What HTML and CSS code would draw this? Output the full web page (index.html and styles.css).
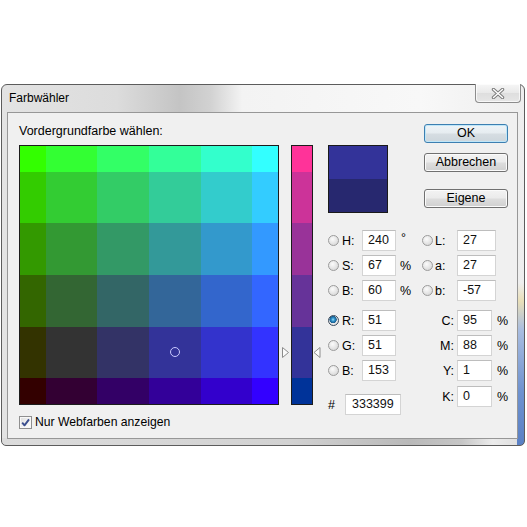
FILE: index.html
```html
<!DOCTYPE html>
<html lang="de">
<head>
<meta charset="utf-8">
<title>Farbwähler</title>
<link rel="stylesheet" href="styles.css">
</head>
<body>
<div class="window">
  <div class="titlebar">
    <span class="title">Farbwähler</span>
    <div class="close">
      <svg width="14" height="11" viewBox="0 0 14 11">
        <path d="M2.5 1.5 L11.5 9.5 M11.5 1.5 L2.5 9.5" stroke="#7c7c7c" stroke-width="3.4" stroke-linecap="round" fill="none"/>
        <path d="M2.5 1.5 L11.5 9.5 M11.5 1.5 L2.5 9.5" stroke="#ffffff" stroke-width="1.4" stroke-linecap="round" fill="none"/>
      </svg>
    </div>
  </div>
  <div class="panel">
    <div class="left">
      <div class="caption">Vordergrundfarbe wählen:</div>
      <div class="pickrow">
        <div class="field">
          <div style="background:#33ff00"></div><div style="background:#33ff33"></div><div style="background:#33ff66"></div><div style="background:#33ff99"></div><div style="background:#33ffcc"></div><div style="background:#33ffff"></div>
          <div style="background:#33cc00"></div><div style="background:#33cc33"></div><div style="background:#33cc66"></div><div style="background:#33cc99"></div><div style="background:#33cccc"></div><div style="background:#33ccff"></div>
          <div style="background:#339900"></div><div style="background:#339933"></div><div style="background:#339966"></div><div style="background:#339999"></div><div style="background:#3399cc"></div><div style="background:#3399ff"></div>
          <div style="background:#336600"></div><div style="background:#336633"></div><div style="background:#336666"></div><div style="background:#336699"></div><div style="background:#3366cc"></div><div style="background:#3366ff"></div>
          <div style="background:#333300"></div><div style="background:#333333"></div><div style="background:#333366"></div><div style="background:#333399"></div><div style="background:#3333cc"></div><div style="background:#3333ff"></div>
          <div style="background:#330000"></div><div style="background:#330033"></div><div style="background:#330066"></div><div style="background:#330099"></div><div style="background:#3300cc"></div><div style="background:#3300ff"></div>
          <span class="marker"></span>
        </div>
        <div class="slider">
          <div class="arrowcol">
            <svg class="arrow arrow-l" width="8" height="11" viewBox="0 0 8 11"><polygon points="0.5,0.5 6.5,5.5 0.5,10.5" fill="#fbfbfb" stroke="#8c8c8c" stroke-width="1"/></svg>
          </div>
          <div class="strip">
            <div style="background:#ff3399"></div>
            <div style="background:#cc3399"></div>
            <div style="background:#993399"></div>
            <div style="background:#663399"></div>
            <div style="background:#333399"></div>
            <div style="background:#003399"></div>
          </div>
          <div class="arrowcol">
            <svg class="arrow arrow-r" width="8" height="11" viewBox="0 0 8 11"><polygon points="7,0.5 1,5.5 7,10.5" fill="#fbfbfb" stroke="#8c8c8c" stroke-width="1"/></svg>
          </div>
        </div>
      </div>
      <div class="webonly">
        <span class="checkbox">
          <svg width="11" height="11" viewBox="0 0 11 11"><path d="M2.2 5.6 L4.5 8.3 L9 2.4" stroke="#3b4f8f" stroke-width="1.9" fill="none" stroke-linejoin="round"/></svg>
        </span>
        <span class="cblabel">Nur Webfarben anzeigen</span>
      </div>
    </div>

    <div class="right">
      <div class="top">
        <div class="preview">
          <div class="newc"></div>
          <div class="oldc"></div>
        </div>
        <div class="buttons">
          <div class="btn default">OK</div>
          <div class="btn">Abbrechen</div>
          <div class="btn eigene">Eigene</div>
        </div>
      </div>

      <div class="values">
        <div class="vcol vleft">
          <div class="vrow"><span class="radio"></span><span class="lbl">H:</span><span class="box">240</span><span class="unit deg">°</span></div>
          <div class="vrow"><span class="radio"></span><span class="lbl">S:</span><span class="box">67</span><span class="unit">%</span></div>
          <div class="vrow"><span class="radio"></span><span class="lbl">B:</span><span class="box">60</span><span class="unit">%</span></div>
          <div class="vrow sep"><span class="radio on"></span><span class="lbl">R:</span><span class="box">51</span></div>
          <div class="vrow"><span class="radio"></span><span class="lbl">G:</span><span class="box">51</span></div>
          <div class="vrow"><span class="radio"></span><span class="lbl">B:</span><span class="box">153</span></div>
          <div class="vrow hex"><span class="hash">#</span><span class="box hexbox">333399</span></div>
        </div>
        <div class="vcol vright">
          <div class="vrow"><span class="radio"></span><span class="lbl2">L:</span><span class="box box2">27</span></div>
          <div class="vrow"><span class="radio"></span><span class="lbl2">a:</span><span class="box box2">27</span></div>
          <div class="vrow"><span class="radio"></span><span class="lbl2">b:</span><span class="box box2">-57</span></div>
          <div class="vrow sep"><span class="clbl">C:</span><span class="box box3">95</span><span class="unit2">%</span></div>
          <div class="vrow"><span class="clbl">M:</span><span class="box box3">88</span><span class="unit2">%</span></div>
          <div class="vrow"><span class="clbl">Y:</span><span class="box box3">1</span><span class="unit2">%</span></div>
          <div class="vrow krow"><span class="clbl">K:</span><span class="box box3">0</span><span class="unit2">%</span></div>
        </div>
      </div>
    </div>
  </div>
</div>
</body>
</html>
```

FILE: styles.css
```css
* { box-sizing: border-box; }

html, body {
  margin: 0;
  padding: 0;
  background: #ffffff;
}

body {
  font-family: "Liberation Sans", Arial, sans-serif;
  font-size: 12.5px;
  color: #000;
  padding: 84px 0 0 1px;
  height: 527px;
  overflow: hidden;
}

/* ---------- window frame ---------- */
.window {
  width: 524px;
  height: 362px;
  border: 1px solid #5c5c5c;
  border-radius: 6px 6px 5px 5px;
  display: flex;
  flex-direction: column;
  background:
    linear-gradient(180deg, rgba(235,235,235,0) 0%, rgba(235,235,235,0) 55%, #e9dfb8 60%, #a9bde0 68%, #6f93d0 85%, #5a80c4 100%) right top / 7px 100% no-repeat,
    linear-gradient(90deg, #dcdcdc 0%, #d2d2d2 55%, #b9b9b9 78%, #c6c6c6 88%, #ececec 94%, #dcdcdc 100%) left bottom / 100% 7px no-repeat,
    linear-gradient(90deg, #e3e3e3 0%, #dcdcdc 22%, #c4c4c4 34%, #d2d2d2 40%, #f3f3f3 46%, #f8f8f8 80%, #eeeeee 100%);
}

.titlebar {
  height: 27px;
  display: flex;
  justify-content: space-between;
  align-items: flex-start;
  flex: none;
}

.title {
  padding-left: 7px;
  line-height: 27px;
  font-size: 12px;
  color: #000;
}

.close {
  width: 46px;
  height: 19px;
  margin-top: -1px;
  margin-right: 3px;
  border: 1px solid #8c8c8c;
  border-top: none;
  border-radius: 0 0 4px 4px;
  background: linear-gradient(180deg, #f6f6f6 0%, #e9e9e9 50%, #dedede 51%, #e6e6e6 100%);
  box-shadow: inset 0 0 0 1px rgba(255,255,255,0.7);
  display: flex;
  align-items: center;
  justify-content: center;
}

/* ---------- inner panel ---------- */
.panel {
  flex: 1;
  margin: 0 6px 6px 5px;
  border: 1px solid #979797;
  background: #f0f0f0;
  padding: 11px 0 0 11px;
  display: flex;
}

.left {
  display: flex;
  flex-direction: column;
}

.caption {
  line-height: 15px;
  margin-bottom: 6px;
}

.pickrow {
  display: flex;
}

.field {
  position: relative;
  width: 260px;
  height: 260px;
  border: 1px solid #1c1c1c;
  display: grid;
  grid-template-columns: 25.8px repeat(4, 51.6px) 25.8px;
  grid-template-rows: 25.8px repeat(4, 51.6px) 25.8px;
}

.marker {
  position: absolute;
  left: 149.8px;
  top: 201.4px;
  width: 10px;
  height: 10px;
  border: 1.2px solid #c9c9ff;
  border-radius: 50%;
}

.slider {
  display: flex;
}

.arrowcol {
  position: relative;
  width: 12px;
}

.arrowcol:last-child {
  width: 8px;
}

.arrow {
  position: absolute;
  top: 202px;
  display: block;
}

.arrow-l { left: 3px; }
.arrow-r { left: 0; }

.strip {
  width: 22px;
  height: 260px;
  border: 1px solid #1c1c1c;
  display: grid;
  grid-template-rows: 25.8px repeat(4, 51.6px) 25.8px;
}

.webonly {
  margin-top: 11px;
  display: flex;
  align-items: center;
  height: 13px;
}

.checkbox {
  width: 13px;
  height: 13px;
  border: 1px solid #8f8f8f;
  background: linear-gradient(135deg, #dcdcdc 0%, #f4f4f4 60%, #ffffff 100%);
  box-shadow: inset 0 0 0 1px #f8f8f8;
  display: flex;
  align-items: center;
  justify-content: center;
  margin-right: 3px;
}

.cblabel {
  font-size: 12.2px;
  line-height: 15px;
}

/* ---------- right side ---------- */
.right {
  margin-left: 7px;
  display: flex;
  flex-direction: column;
}

.top {
  display: flex;
  align-items: flex-start;
  height: 89px;
}

.preview {
  margin-top: 21px;
  width: 60px;
  height: 68px;
  border: 1px solid #1a1a1a;
  display: flex;
  flex-direction: column;
}

.newc { flex: 1; background: #333399; }
.oldc { flex: 1; background: #27286f; }

.buttons {
  margin-left: 36px;
  display: flex;
  flex-direction: column;
}

.btn {
  width: 84px;
  height: 19px;
  border: 1px solid #707070;
  border-radius: 3px;
  background: linear-gradient(180deg, #f3f3f3 0%, #ebebeb 48%, #dddddd 52%, #d0d0d0 100%);
  box-shadow: inset 0 0 0 1px #fbfbfb;
  text-align: center;
  line-height: 17px;
  font-size: 12.5px;
}

.btn + .btn { margin-top: 10px; }
.btn.eigene { margin-top: 17px; }

.btn.default {
  border-color: #3c7fb1;
  box-shadow: inset 0 0 0 1px #bfe6f8;
  background: linear-gradient(180deg, #eef4f8 0%, #e6ecf0 48%, #d6dde2 52%, #cdd6dc 100%);
}

.values {
  margin-top: 17px;
  display: flex;
}

.vcol {
  display: flex;
  flex-direction: column;
}

.vleft { width: 89px; }

.vrow {
  height: 21px;
  display: flex;
  align-items: center;
  margin-bottom: 4px;
}

.vrow.sep { margin-top: 5px; }
.vrow.hex { margin-top: 9px; }
.vrow.krow { margin-top: 1px; }

.radio {
  width: 11px;
  height: 11px;
  border-radius: 50%;
  border: 1px solid #9b9b9b;
  background: radial-gradient(circle at 40% 35%, #fbfbfb 0%, #e6e6e6 50%, #cfcfcf 100%);
  flex: none;
}

.radio.on {
  border-color: #3a4a5c;
  background: radial-gradient(circle at 45% 40%, #9fe0fb 0, #2f93cb 1.6px, #1a5d8e 3.4px, #e9e9e9 3.9px, #d6d6d6 100%);
}

.vright .radio { margin-left: 5px; }

.lbl {
  width: 20px;
  margin-left: 3px;
}

.lbl2 {
  width: 22px;
  margin-left: 2px;
}

.clbl {
  width: 37px;
  text-align: right;
  margin-right: 3px;
}

.box {
  width: 34px;
  height: 21px;
  background: #ffffff;
  border: 1px solid #d4d4d4;
  border-top-color: #bdbdbd;
  padding-left: 5px;
  line-height: 19px;
  color: #111;
}

.box2 { width: 39px; }
.box3 { width: 35px; }

.unit {
  margin-left: 4px;
}

.unit.deg {
  align-self: flex-start;
  line-height: 17px;
  margin-left: 5px;
}

.unit2 {
  margin-left: 5px;
}

.hash {
  width: 17px;
}

.hexbox {
  width: 56px;
  padding-left: 6px;
}
```
